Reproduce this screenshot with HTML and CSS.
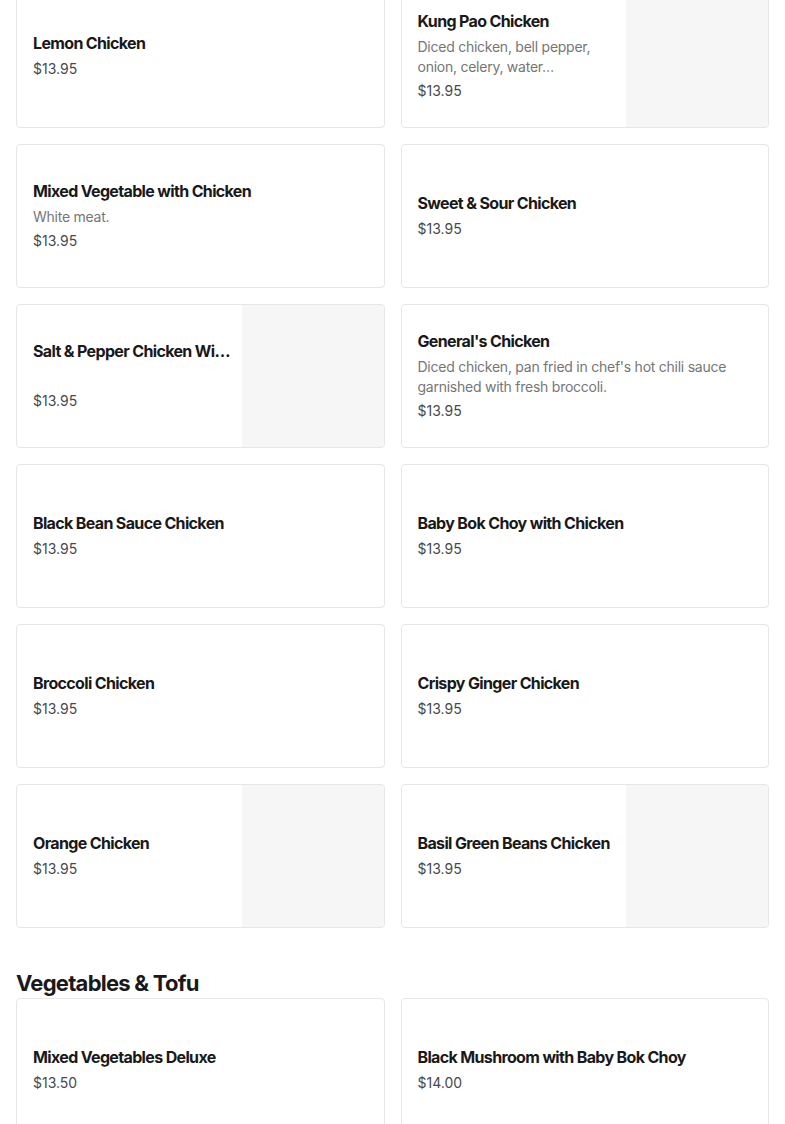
FILE: index.html
```html
<!DOCTYPE html>
<html lang="en">
<head>
<meta charset="utf-8">
<title>Menu</title>
<link rel="stylesheet" href="styles.css">
</head>
<body>
<main class="menu">
  <section class="section section-first">
    <div class="grid">
      <div class="card">
        <div class="info">
          <div class="title">Lemon Chicken</div>
          <div class="price">$13.95</div>
        </div>
      </div>
      <div class="card">
        <div class="info">
          <div class="title">Kung Pao Chicken</div>
          <div class="desc">Diced chicken, bell pepper, onion, celery, water…</div>
          <div class="price">$13.95</div>
        </div>
        <div class="thumb"></div>
      </div>
      <div class="card">
        <div class="info">
          <div class="title">Mixed Vegetable with Chicken</div>
          <div class="desc">White meat.</div>
          <div class="price">$13.95</div>
        </div>
      </div>
      <div class="card">
        <div class="info">
          <div class="title">Sweet &amp; Sour Chicken</div>
          <div class="price">$13.95</div>
        </div>
      </div>
      <div class="card">
        <div class="info info-tight">
          <div class="title">Salt &amp; Pepper Chicken With Jalapeño</div>
          <div class="desc">&nbsp;</div>
          <div class="price">$13.95</div>
        </div>
        <div class="thumb"></div>
      </div>
      <div class="card">
        <div class="info">
          <div class="title">General's Chicken</div>
          <div class="desc">Diced chicken, pan fried in chef's hot chili sauce garnished with fresh broccoli.</div>
          <div class="price">$13.95</div>
        </div>
      </div>
      <div class="card">
        <div class="info">
          <div class="title">Black Bean Sauce Chicken</div>
          <div class="price">$13.95</div>
        </div>
      </div>
      <div class="card">
        <div class="info">
          <div class="title">Baby Bok Choy with Chicken</div>
          <div class="price">$13.95</div>
        </div>
      </div>
      <div class="card">
        <div class="info">
          <div class="title">Broccoli Chicken</div>
          <div class="price">$13.95</div>
        </div>
      </div>
      <div class="card">
        <div class="info">
          <div class="title">Crispy Ginger Chicken</div>
          <div class="price">$13.95</div>
        </div>
      </div>
      <div class="card">
        <div class="info">
          <div class="title">Orange Chicken</div>
          <div class="price">$13.95</div>
        </div>
        <div class="thumb"></div>
      </div>
      <div class="card">
        <div class="info">
          <div class="title">Basil Green Beans Chicken</div>
          <div class="price">$13.95</div>
        </div>
        <div class="thumb"></div>
      </div>
    </div>
  </section>
  <section class="section">
    <h2 class="section-title">Vegetables &amp; Tofu</h2>
    <div class="grid">
      <div class="card">
        <div class="info">
          <div class="title">Mixed Vegetables Deluxe</div>
          <div class="price">$13.50</div>
        </div>
      </div>
      <div class="card">
        <div class="info">
          <div class="title">Black Mushroom with Baby Bok Choy</div>
          <div class="price">$14.00</div>
        </div>
      </div>
    </div>
  </section>
</main>
</body>
</html>
```
FILE: styles.css
```css
html, body {
  margin: 0;
  padding: 0;
  background: #ffffff;
}
body {
  font-family: Inter, "Noto Sans", "Liberation Sans", sans-serif;
  color: #191919;
  overflow: hidden;
}
.menu {
  padding: 0 16px;
}
.section-first {
  margin-top: -16px;
}
.section + .section {
  margin-top: 42px;
}
.section-title {
  margin: 0 0 2px;
  font-size: 22px;
  line-height: 26px;
  font-weight: 700;
  color: #191919;
  letter-spacing: -0.75px;
}
.grid {
  display: grid;
  grid-template-columns: 1fr 1fr;
  grid-auto-rows: 144px;
  gap: 16px;
}
.card {
  display: flex;
  border: 1px solid #e6e6e6;
  border-radius: 4px;
  overflow: hidden;
  background: #ffffff;
  box-sizing: border-box;
}
.info {
  flex: 1;
  min-width: 0;
  padding: 0 16px;
  display: flex;
  flex-direction: column;
  justify-content: center;
}
.info-tight {
  padding-right: 10px;
}
.title {
  font-size: 16px;
  line-height: 24px;
  font-weight: 700;
  color: #191919;
  white-space: nowrap;
  overflow: hidden;
  text-overflow: ellipsis;
  letter-spacing: -0.65px;
  margin-top: -2px;
}
.desc {
  margin-top: 4px;
  font-size: 14px;
  line-height: 20px;
  color: #767676;
  letter-spacing: -0.25px;
  display: -webkit-box;
  -webkit-line-clamp: 2;
  -webkit-box-orient: vertical;
  overflow: hidden;
  min-height: 20px;
}
.price {
  margin-top: 4px;
  font-size: 14px;
  line-height: 20px;
  color: #494949;
}
.thumb {
  flex: 0 0 142px;
  background: #f6f6f6;
}
```
